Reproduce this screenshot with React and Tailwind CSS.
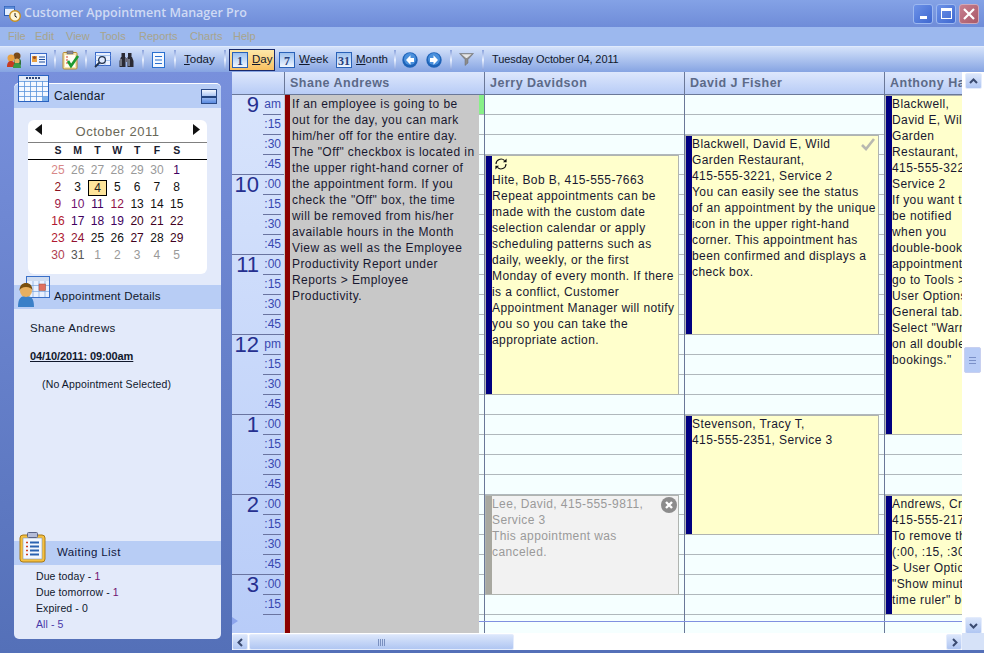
import React from "react";

const font = { fontFamily: '"Liberation Sans", Arial, sans-serif' };

const Sep = ({ cls = "mx-[7px]" }) => (
  <div className={"w-[2px] h-[20px] bg-gradient-to-b from-[#8aa2dc] via-[#e8f0ff] to-[#8aa2dc] shrink-0 " + cls} />
);

function PeopleIcon() {
  return (
    <svg width="17" height="18" viewBox="0 0 17 18" className="shrink-0">
      <circle cx="11" cy="5" r="3.5" fill="#7a4a18" />
      <rect x="8" y="8" width="7" height="7" rx="2" fill="#2f6e3a" />
      <circle cx="5" cy="7" r="3.5" fill="#e8a040" />
      <path d="M1 16c0-5 2-6 4-6s4 1 4 6z" fill="#c83a20" />
      <circle cx="11" cy="10" r="2.6" fill="#e8b060" />
      <path d="M7 17c0-4 2-5 4-5s4 1 4 5z" fill="#3a9a48" />
    </svg>
  );
}
function CardIcon() {
  return (
    <svg width="17" height="13" viewBox="0 0 17 13" className="shrink-0">
      <rect x="0.5" y="0.5" width="16" height="12" fill="#eef4ff" stroke="#3a6ac8" />
      <rect x="2" y="3" width="5" height="6" fill="#e8a040" />
      <circle cx="4.5" cy="4.5" r="1.6" fill="#a05020" />
      <path d="M9 4h6M9 6.5h6M9 9h6" stroke="#1a4a9a" strokeWidth="1" />
    </svg>
  );
}
function ClipCheckIcon() {
  return (
    <svg width="18" height="20" viewBox="0 0 18 20" className="shrink-0">
      <rect x="1" y="2.5" width="14" height="16.5" rx="1" fill="#f4e6b0" stroke="#b88a30" />
      <rect x="3" y="5" width="10" height="12" fill="#fffdf4" />
      <rect x="5" y="1" width="6" height="3" fill="#8a8a9a" stroke="#555" strokeWidth="0.5" />
      <path d="M4 7h2M4 10h2M4 13h2" stroke="#d04030" strokeWidth="1.2" />
      <path d="M6 11l3 5 7-10" fill="none" stroke="#1c9a30" strokeWidth="2.6" />
    </svg>
  );
}
function SearchDocIcon() {
  return (
    <svg width="17" height="16" viewBox="0 0 17 16" className="shrink-0">
      <rect x="1.5" y="0.5" width="15" height="13" fill="#e8f0ff" stroke="#3a6ac8" />
      <path d="M1.5 3.5h15M6 3.5v10M11 3.5v10M1.5 8.5h15" stroke="#8ab0e8" strokeWidth="0.7" />
      <circle cx="8" cy="8" r="3.4" fill="#dfeaff" stroke="#20304a" strokeWidth="1.2" />
      <path d="M5.5 10.5L1 15" stroke="#20304a" strokeWidth="1.8" />
    </svg>
  );
}
function BinocularsIcon() {
  return (
    <svg width="15" height="16" viewBox="0 0 15 16" className="shrink-0">
      <rect x="2.5" y="1" width="3.5" height="4" fill="#2a2a34" />
      <rect x="9" y="1" width="3.5" height="4" fill="#2a2a34" />
      <path d="M2 5h4.5v10H0.5V9z" fill="#2a2a34" />
      <path d="M13 5H8.5v10h6V9z" fill="#2a2a34" />
      <rect x="6.5" y="6" width="2" height="4" fill="#6a6a78" />
      <path d="M2 7v7M10 7v7" stroke="#c8d0e0" strokeWidth="0.9" />
    </svg>
  );
}
function ListDocIcon() {
  return (
    <svg width="13" height="16" viewBox="0 0 13 16" className="shrink-0">
      <rect x="0.5" y="0.5" width="12" height="15" fill="#f4f8ff" stroke="#2a70d0" />
      <path d="M3 4.5h7M3 8h7M3 11.5h7" stroke="#2a70d0" strokeWidth="1.2" />
    </svg>
  );
}
function FilterIcon() {
  return (
    <svg width="15" height="13" viewBox="0 0 15 13" className="shrink-0">
      <path d="M0.5 0.5h14L9 6.5V10L6 12.5V6.5z" fill="#8c8c8c" stroke="#6a6a6a" strokeWidth="0.5" />
      <path d="M2.5 1.3h10L8 5H7z" fill="#e6e6e6" />
    </svg>
  );
}
function ArrowCircle({ dir }) {
  return (
    <svg width="16" height="16" viewBox="0 0 16 16" className="shrink-0">
      <circle cx="8" cy="8" r="7.7" fill="#1e63b8" />
      <circle cx="8" cy="7" r="6" fill="#4a90dc" />
      <path
        d={dir === "l" ? "M8.5 3.2L4 8l4.5 4.8V10H12V6H8.5z" : "M7.5 3.2L12 8l-4.5 4.8V10H4V6h3.5z"}
        fill="#ffffff"
      />
    </svg>
  );
}
function NumIcon({ n }) {
  return (
    <div className="w-[16px] h-[16px] shrink-0 border border-[#2a62b8] bg-gradient-to-b from-[#9cc0ee] to-[#f0f6ff] flex items-center justify-center pt-[2px] text-[12px] leading-none font-bold text-[#27407a]" style={{ fontFamily: '"Liberation Serif", serif' }}>
      {n}
    </div>
  );
}
function TitleLogo() {
  return (
    <svg width="17" height="17" viewBox="0 0 17 17" className="shrink-0">
      <rect x="0.5" y="1.5" width="10" height="9" fill="#e4eeff" stroke="#2a5ab0" />
      <rect x="0.5" y="1.5" width="10" height="2.4" fill="#5a8ad8" />
      <circle cx="11" cy="11" r="5.3" fill="#fff6d8" stroke="#c89020" strokeWidth="1.4" />
      <path d="M11 8v3.2l2 1.2" fill="none" stroke="#222" strokeWidth="1" />
    </svg>
  );
}
function BigCalIcon() {
  return (
    <svg width="31" height="27" viewBox="0 0 31 27">
      <rect x="0.5" y="0.5" width="30" height="26" fill="#f4f8ff" stroke="#2a62c0" />
      <rect x="1" y="1" width="29" height="5" fill="#e4ecf8" />
      <path d="M8 3h15" stroke="#304878" strokeWidth="2" strokeDasharray="2 1" />
      <path d="M1 6.5h29M1 11.5h29M1 16.5h29M1 21.5h29M6.5 6v20M12.5 6v20M18.5 6v20M24.5 6v20" stroke="#5a94dc" strokeWidth="0.8" />
      <rect x="25" y="22" width="5" height="4" fill="#7ab0ea" />
    </svg>
  );
}
function CollapseIcon() {
  return (
    <div className="w-[16px] h-[15px] border border-[#2a4a88] bg-gradient-to-b from-[#f4f8ff] to-[#5a8ae0] flex flex-col justify-center">
      <div className="h-[2px] bg-[#24447e]" />
    </div>
  );
}
function PersonCalIcon() {
  return (
    <svg width="33" height="31" viewBox="0 0 33 31">
      <rect x="9.5" y="0.5" width="23" height="21" fill="#e8f0ff" stroke="#3a70c8" />
      <rect x="10" y="1" width="22" height="4" fill="#d0dcf0" />
      <path d="M10 9.5h22M10 15.5h22M16 5v16M22 5v16M28 5v16" stroke="#7aa4dc" strokeWidth="0.7" />
      <rect x="22" y="8" width="6.5" height="6.5" fill="#e07060" stroke="#a04a3a" strokeWidth="0.5" />
      <path d="M1 31c0-9 3-11 8-11s8 2 8 11z" fill="#3a80c8" />
      <circle cx="9" cy="15" r="6" fill="#e8b060" />
      <path d="M2.5 15c0-6 3-8 6.5-8s6.5 2 6.5 8c-1-3-3-4-6.5-4s-5.5 1-6.5 4z" fill="#7a5010" />
    </svg>
  );
}
function ClipboardBigIcon() {
  return (
    <svg width="27" height="31" viewBox="0 0 27 31">
      <rect x="1" y="3" width="25" height="27" rx="3" fill="#f6c040" stroke="#a87a18" />
      <rect x="4" y="6" width="19" height="21" fill="#f4f8ff" stroke="#6a88b8" strokeWidth="0.5" />
      <rect x="8.5" y="0.5" width="10" height="5" rx="1" fill="#b4bcd8" stroke="#5a6488" />
      <path d="M7 10.5h2M7 14.5h2M7 18.5h2M7 22.5h2" stroke="#d04020" strokeWidth="1.6" />
      <path d="M11 10.5h9M11 14.5h9M11 18.5h9M11 22.5h9" stroke="#2a62b0" strokeWidth="2" />
    </svg>
  );
}
function RepeatIcon() {
  return (
    <svg width="14" height="14" viewBox="0 0 14 14">
      <path d="M2 7a5 5 0 0 1 8.6-3.4M12 7a5 5 0 0 1-8.6 3.4" fill="none" stroke="#111" strokeWidth="1.1" />
      <path d="M12.6 1.6v3.6H9zM1.4 12.4V8.8H5z" fill="#111" />
    </svg>
  );
}

function ToolBtn({ n, k, rest, active, cls }) {
  return (
    <div className={"flex items-center h-[22px] gap-[4px] shrink-0 " + (active ? "border border-[#1a2a6c] bg-gradient-to-b from-[#fde8a8] to-[#f8c060] " : "") + cls}>
      <NumIcon n={n} />
      <span className="text-[11.5px] text-[#10182c]"><span className="underline">{k}</span>{rest}</span>
    </div>
  );
}

function TitleBar() {
  return (
    <div className="h-[27px] shrink-0 flex items-center pl-[4px] bg-gradient-to-b from-[#84a2e6] to-[#6f8cd8]">
      <TitleLogo />
      <span className="ml-[3px] text-[12.5px] text-[#cfdaf4] whitespace-nowrap" style={{ fontFamily: '"Open Sans", sans-serif', fontWeight: 600 }}>Customer Appointment Manager Pro</span>
      <div className="ml-auto mr-[5px] flex gap-[3px]">
        <div className="w-[20px] h-[20px] rounded-[3px] border border-[#9cb8f0] bg-gradient-to-br from-[#6d92e8] to-[#3f68d0] flex items-end justify-center pb-[4px]"><div className="w-[7px] h-[3px] bg-white" /></div>
        <div className="w-[20px] h-[20px] rounded-[3px] border border-[#9cb8f0] bg-gradient-to-br from-[#6d92e8] to-[#3f68d0] flex items-center justify-center"><div className="w-[11px] h-[11px] border border-white border-t-[3px]" /></div>
        <div className="w-[20px] h-[20px] rounded-[3px] border border-[#d0a8b8] bg-gradient-to-br from-[#c88090] to-[#a85868] flex items-center justify-center">
          <svg width="12" height="12" viewBox="0 0 12 12"><path d="M1 1l10 10M11 1L1 11" stroke="#fff" strokeWidth="2.2" /></svg>
        </div>
      </div>
    </div>
  );
}

function MenuBar() {
  const items = [["File", "w-[27px]"], ["Edit", "w-[31px]"], ["View", "w-[34px]"], ["Tools", "w-[39px]"], ["Reports", "w-[51px]"], ["Charts", "w-[43px]"], ["Help", "w-[30px]"]];
  return (
    <div className="h-[19px] shrink-0 flex items-center pl-[8px] bg-[#9cb8ee] text-[11px] text-[#a8a48c]">
      {items.map(([t, w]) => <span key={t} className={w}>{t}</span>)}
    </div>
  );
}

function ToolBar() {
  return (
    <div className="h-[26px] shrink-0 flex items-center pl-[6px] border-t border-[#e0eafc] bg-gradient-to-b from-[#d5e2fa] to-[#86a4e2]">
      <PeopleIcon />
      <div className="ml-[7px]"><CardIcon /></div>
      <Sep cls="ml-[7px] mr-[6px]" />
      <ClipCheckIcon />
      <Sep cls="ml-[5px] mr-[7px]" />
      <SearchDocIcon />
      <div className="ml-[8px]"><BinocularsIcon /></div>
      <Sep cls="ml-[8px] mr-[8px]" />
      <ListDocIcon />
      <Sep cls="ml-[9px] mr-[8px]" />
      <span className="text-[11.5px] text-[#10182c] w-[31px]"><span className="underline">T</span>oday</span>
      <Sep cls="ml-[9px] mr-[3px]" />
      <ToolBtn n="1" k="D" rest="ay" active cls="w-[46px] pl-[2px]" />
      <ToolBtn n="7" k="W" rest="eek" cls="w-[50px] ml-[4px]" />
      <ToolBtn n="31" k="M" rest="onth" cls="w-[52px] ml-[7px]" />
      <Sep cls="ml-[6px] mr-[6px]" />
      <ArrowCircle dir="l" />
      <div className="ml-[8px]"><ArrowCircle dir="r" /></div>
      <Sep cls="ml-[8px] mr-[7px]" />
      <FilterIcon />
      <Sep cls="ml-[8px] mr-[8px]" />
      <span className="text-[11px] tracking-[-0.1px] text-[#10182c] whitespace-nowrap">Tuesday October 04, 2011</span>
    </div>
  );
}

const DAYS = [
  [["25", "text-[#d88888]"], ["26", "text-[#999]"], ["27", "text-[#999]"], ["28", "text-[#999]"], ["29", "text-[#999]"], ["30", "text-[#999]"], ["1", "text-[#400060]"]],
  [["2", "text-[#8a1020]"], ["3", "text-[#111]"], ["4", "sel"], ["5", "text-[#111]"], ["6", "text-[#111]"], ["7", "text-[#111]"], ["8", "text-[#111]"]],
  [["9", "text-[#a02048]"], ["10", "text-[#701070]"], ["11", "text-[#400060]"], ["12", "text-[#901048]"], ["13", "text-[#111]"], ["14", "text-[#111]"], ["15", "text-[#111]"]],
  [["16", "text-[#b01830]"], ["17", "text-[#400060]"], ["18", "text-[#400060]"], ["19", "text-[#400060]"], ["20", "text-[#400020]"], ["21", "text-[#400020]"], ["22", "text-[#400020]"]],
  [["23", "text-[#b01830]"], ["24", "text-[#901030]"], ["25", "text-[#111]"], ["26", "text-[#111]"], ["27", "text-[#400020]"], ["28", "text-[#111]"], ["29", "text-[#400020]"]],
  [["30", "text-[#b04050]"], ["31", "text-[#555]"], ["1", "text-[#999]"], ["2", "text-[#999]"], ["3", "text-[#999]"], ["4", "text-[#999]"], ["5", "text-[#999]"]],
];

function MiniCal() {
  return (
    <div className="mx-[14px] mt-[12px] h-[154px] bg-white rounded-[6px] flex flex-col">
      <div className="h-[23px] shrink-0 relative flex items-center justify-center pt-[1px] border-b border-[#808080]">
        <svg width="7" height="11" viewBox="0 0 7 11" className="absolute left-[7px] top-[4px]"><path d="M7 0v11L0 5.5z" fill="#111" /></svg>
        <span className="text-[13px] tracking-[0.5px] text-[#6a6858]">October 2011</span>
        <svg width="7" height="11" viewBox="0 0 7 11" className="absolute right-[7px] top-[4px]"><path d="M0 0v11l7-5.5z" fill="#111" /></svg>
      </div>
      <div className="h-[17px] shrink-0 border-b border-black pl-[20px] grid grid-cols-[repeat(7,19.8px)] items-center text-[10.5px] font-bold text-[#1a2030] text-center">
        {["S", "M", "T", "W", "T", "F", "S"].map((d, i) => <span key={i}>{d}</span>)}
      </div>
      <div className="pl-[20px] pt-[2px] grid grid-cols-[repeat(7,19.8px)] auto-rows-[17px] text-[12px] text-center leading-[17px]">
        {DAYS.flat().map(([d, c], i) =>
          c === "sel" ? (
            <div key={i} className="flex justify-center items-center"><div className="w-[19px] h-[16px] bg-[#fde49a] border border-black text-[#222] leading-[14px]">{d}</div></div>
          ) : <span key={i} className={c}>{d}</span>
        )}
      </div>
    </div>
  );
}

function LeftPanel() {
  return (
    <div className="w-[232px] shrink-0 h-full bg-gradient-to-b from-[#7890dc] to-[#5470b8] pl-[14px] pr-[11px] pt-[11px]">
      <div className="relative h-[556px] rounded-[5px] bg-[#e3eafa] border-t border-white flex flex-col text-[#10182c]">
        <div className="h-[24px] shrink-0 rounded-t-[5px] bg-[#b8cdf5] flex items-center pl-[40px] pr-[4px] text-[12px] font-medium tracking-[0.3px]">
          <span>Calendar</span>
          <div className="ml-auto mt-[1px]"><CollapseIcon /></div>
        </div>
        <div className="absolute left-[4px] top-[-9px]"><BigCalIcon /></div>
        <MiniCal />
        <div className="relative mt-[11px] h-[24px] shrink-0 bg-[#b8cdf5] flex items-center pl-[40px] text-[11.5px] tracking-[0.2px]">
          <span>Appointment Details</span>
          <div className="absolute left-[3px] top-[-9px]"><PersonCalIcon /></div>
        </div>
        <div className="pl-[16px] pt-[12px] text-[11px] h-[232px] shrink-0">
          <div className="leading-[14px] text-[11.5px] tracking-[0.4px]">Shane Andrews</div>
          <div className="mt-[14px] leading-[14px] font-bold underline tracking-[-0.1px]">04/10/2011: 09:00am</div>
          <div className="mt-[14px] ml-[12px] leading-[14px] text-[10.5px] tracking-[0.15px]">(No Appointment Selected)</div>
        </div>
        <div className="relative h-[24px] shrink-0 bg-[#b8cdf5] flex items-center pl-[43px] text-[11.5px] tracking-[0.4px] text-[#101840]">
          <span>Waiting List</span>
          <div className="absolute left-[5px] top-[-9px]"><ClipboardBigIcon /></div>
        </div>
        <div className="pl-[22px] pt-[3px] text-[10.5px] leading-[16px] tracking-[0.1px]">
          <div>Due today - <span className="text-[#701070]">1</span></div>
          <div>Due tomorrow - <span className="text-[#701070]">1</span></div>
          <div>Expired - 0</div>
          <div className="text-[#4838a8]">All - 5</div>
        </div>
      </div>
    </div>
  );
}

function RulerHour({ h, suffix, last }) {
  const rows = last ? [":00", ":15"] : [suffix || ":00", ":15", ":30", ":45"];
  return (
    <div className={"shrink-0 pl-[3px] pr-[3px] relative " + (last ? "" : "h-[80px] border-b border-[#6a74a0]")}>
      <div className="absolute left-0 top-0 w-[28px] pr-[1px] text-right text-[22px] leading-[22px] mt-[-1px] text-[#263090]">{h}</div>
      <div className="flex flex-col items-end">
        {rows.map((r, i) => (
          <div key={i} className={"h-[20px] w-[18px] text-[12px] leading-[19px] text-[#3848b0] text-right " + (i < 3 ? "border-b border-[#6a74a0]" : "")}>{r}</div>
        ))}
      </div>
    </div>
  );
}

function Ruler() {
  const hs = [["9", "am"], ["10"], ["11"], ["12", "pm"], ["1"], ["2"]];
  return (
    <div className="w-[52px] shrink-0 h-full bg-gradient-to-b from-[#d8e4fc] to-[#b8ccf8] pb-[2px] relative">
      {hs.map(([h, s]) => <RulerHour key={h} h={h} suffix={s} />)}
      <RulerHour h="3" last />
      <svg width="6" height="8" viewBox="0 0 6 8" className="absolute left-0 top-[522px]"><path d="M0 0l6 4-6 4z" fill="#8ca4ec" /></svg>
    </div>
  );
}

function Appt({ top, h, left, w, bar = "bg-[#000080]", bg = "bg-[#ffffcc]", text = "text-[#181830]", lines, icon, corner }) {
  return (
    <div className={"absolute flex border border-[#b0b4b0] " + bg} style={{ top, height: h, left, width: w }}>
      <div className={"w-[6px] shrink-0 " + bar} />
      <div className={"flex-1 overflow-hidden text-[12px] leading-[16px] tracking-[0.4px] whitespace-nowrap " + text}>
        {icon && <div className="h-[16px] pl-[2px] pt-[1px]"><RepeatIcon /></div>}
        {lines.map((l, i) => <div key={i}>{l}</div>)}
      </div>
      {corner && <div className="absolute right-[1px] top-[1px]">{corner}</div>}
    </div>
  );
}

function GridCol({ w }) {
  return (
    <div className="shrink-0 h-full border-l border-[#6a7898] bg-[#f5ffff] overflow-hidden" style={{ width: w }}>
      {Array.from({ length: 27 }).map((_, i) => (
        <div key={i} className="h-[20px] border-b border-[#b0b8bc]" />
      ))}
    </div>
  );
}

const SHANE = ["If an employee is going to be", "out for the day, you can mark", "him/her off for the entire day.", "The \"Off\" checkbox is located in", "the upper right-hand corner of", "the appointment form. If you", "check the \"Off\" box, the time", "will be removed from his/her", "available hours in the Month", "View as well as the Employee", "Productivity Report under", "Reports > Employee", "Productivity."];
const HITE = ["Hite, Bob B, 415-555-7663", "Repeat appointments can be", "made with the custom date", "selection calendar or apply", "scheduling patterns such as", "daily, weekly, or the first", "Monday of every month. If there", "is a conflict, Customer", "Appointment Manager will notify", "you so you can take the", "appropriate action."];
const LEE = ["Lee, David, 415-555-9811,", "Service 3", "This appointment was", "canceled."];
const BW = ["Blackwell, David E, Wild", "Garden Restaurant,", "415-555-3221, Service 2", "You can easily see the status", "of an appointment by the unique", "icon in the upper right-hand", "corner. This appointment has", "been confirmed and displays a", "check box."];
const ST = ["Stevenson, Tracy T,", "415-555-2351, Service 3"];
const AH = ["Blackwell,", "David E, Wild", "Garden", "Restaurant,", "415-555-3221,", "Service 2", "If you want to", "be notified", "when you", "double-book", "appointments,", "go to Tools >", "User Options,", "General tab.", "Select \"Warn", "on all double", "bookings.\""];
const AN = ["Andrews, Craig", "415-555-2177", "To remove the", "(:00, :15, :30)", "> User Options", "\"Show minutes", "time ruler\" box"];

function Schedule() {
  const heads = [["Shane Andrews", "w-[200px]"], ["Jerry Davidson", "w-[200px]"], ["David J Fisher", "w-[200px]"], ["Anthony Harris", "w-[78px]"]];
  const X = <svg width="16" height="16" viewBox="0 0 16 16"><circle cx="8" cy="8" r="8" fill="#8c8c8c" /><path d="M5 5l6 6M11 5l-6 6" stroke="#fff" strokeWidth="2.4" /></svg>;
  const Ck = <svg width="15" height="13" viewBox="0 0 15 13"><path d="M1 7l4 4 8-10" fill="none" stroke="#b8b8b0" strokeWidth="2.6" /></svg>;
  return (
    <div className="w-[730px] shrink-0 h-full flex flex-col overflow-hidden">
      <div className="h-[23px] shrink-0 flex border-b border-[#6a7898] bg-gradient-to-b from-[#dde7fc] to-[#b8ccf6]">
        <div className="w-[52px] shrink-0" />
        {heads.map(([t, w]) => (
          <div key={t} className={"shrink-0 overflow-hidden whitespace-nowrap border-l border-[#6a7898] pl-[5px] text-[12.5px] font-bold tracking-[0.5px] leading-[23px] text-[#5c6a88] " + w}>{t}</div>
        ))}
      </div>
      <div className="flex-1 flex min-h-0">
        <Ruler />
        <div className="relative flex-1 flex overflow-hidden">
          <GridCol w={200} />
          <GridCol w={200} />
          <GridCol w={200} />
          <GridCol w={78} />
          <div className="absolute left-[195px] top-0 w-[5px] h-[19px] bg-[#88f088]" />
          <div className="absolute left-0 right-0 top-[526px] h-px bg-[#8090e0]" />
          <div className="absolute left-[0px] top-0 bottom-0 w-[195px] flex bg-[#c8c8c8]">
            <div className="ml-[1px] w-[5px] shrink-0 bg-[#8b0000]" />
            <div className="pl-[2px] pt-[1px] text-[12px] leading-[16px] tracking-[0.42px] whitespace-nowrap text-[#181830]">
              {SHANE.map((l, i) => <div key={i}>{l}</div>)}
            </div>
          </div>
          <Appt top={60} h={240} left={201} w={194} icon lines={HITE} />
          <Appt top={400} h={100} left={201} w={194} bar="bg-[#a8a8a0]" bg="bg-[#f2f2f2]" text="text-[#9a9a9a]" lines={LEE} corner={X} />
          <Appt top={40} h={200} left={401} w={194} lines={BW} corner={<div className="pt-[1px] pr-[1px]">{Ck}</div>} />
          <Appt top={320} h={120} left={401} w={194} lines={ST} />
          <Appt top={0} h={340} left={601} w={90} lines={AH} />
          <Appt top={400} h={120} left={601} w={90} lines={AN} />
        </div>
      </div>
    </div>
  );
}

function ScrollBtn({ children, cls = "" }) {
  return <div className={"flex items-center justify-center rounded-[2px] border border-[#e4ecfc] bg-gradient-to-b from-[#dbe6fb] to-[#b0c6f2] " + cls}>{children}</div>;
}
const Chev = ({ d }) => <svg width="9" height="9" viewBox="0 0 9 9"><path d={d} fill="none" stroke="#3a4a70" strokeWidth="2" /></svg>;

function VScroll() {
  return (
    <div className="w-[22px] shrink-0 h-full bg-white pl-[3px] flex flex-col pt-[1px]">
      <ScrollBtn cls="w-[17px] h-[16px] shrink-0"><Chev d="M1 6l3.5-3.5L8 6" /></ScrollBtn>
      <div className="w-[17px] h-[26px] shrink-0 mt-[258px] -ml-[1px] rounded-[2px] border border-[#c8d0f0] bg-[#b8ccf6] flex flex-col gap-[2px] items-center justify-center">
        <div className="w-[7px] h-px bg-[#7a90c8]" /><div className="w-[7px] h-px bg-[#7a90c8]" /><div className="w-[7px] h-px bg-[#7a90c8]" />
      </div>
      <ScrollBtn cls="w-[17px] h-[17px] shrink-0 mt-[244px]"><Chev d="M1 3l3.5 3.5L8 3" /></ScrollBtn>
    </div>
  );
}

function HScroll() {
  return (
    <div className="h-[17px] shrink-0 flex bg-white">
      <div className="w-[730px] flex items-end">
        <ScrollBtn cls="w-[16px] h-[16px] shrink-0"><Chev d="M6 1L2.5 4.5 6 8" /></ScrollBtn>
        <ScrollBtn cls="w-[265px] h-[16px] shrink-0 ml-[1px]">
          <div className="flex gap-[1px]"><div className="w-px h-[7px] bg-[#7a90c0]" /><div className="w-px h-[7px] bg-[#7a90c0]" /><div className="w-px h-[7px] bg-[#7a90c0]" /><div className="w-px h-[7px] bg-[#7a90c0]" /></div>
        </ScrollBtn>
        <ScrollBtn cls="w-[16px] h-[16px] shrink-0 ml-auto"><Chev d="M3 1l3.5 3.5L3 8" /></ScrollBtn>
      </div>
      <div className="flex-1 bg-[#d6e2f8]" />
    </div>
  );
}

export default function App() {
  return (
    <div className="w-[984px] h-[653px] flex flex-col overflow-hidden" style={font}>
      <TitleBar />
      <MenuBar />
      <ToolBar />
      <div className="flex-1 flex min-h-0">
        <LeftPanel />
        <div className="flex-1 flex flex-col min-w-0">
          <div className="flex-1 flex min-h-0">
            <Schedule />
            <VScroll />
          </div>
          <HScroll />
          <div className="h-[3px] shrink-0 bg-[#5470b8]" />
        </div>
      </div>
    </div>
  );
}
